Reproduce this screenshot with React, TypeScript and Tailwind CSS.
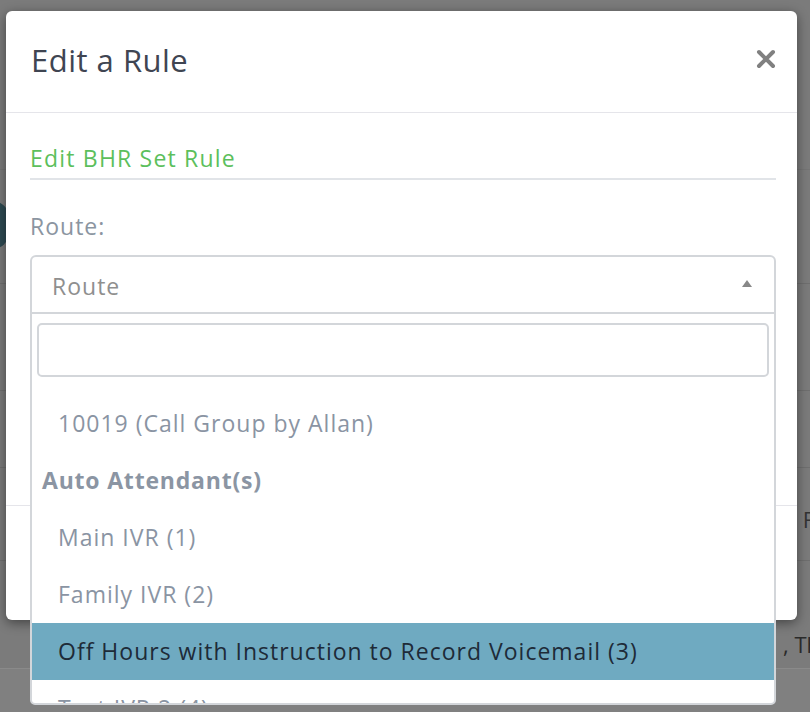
import { useState } from "react";

type Option = {
  label: string;
  group?: boolean;
};

const options: Option[] = [
  { label: "10019 (Call Group by Allan)" },
  { label: "Auto Attendant(s)", group: true },
  { label: "Main IVR (1)" },
  { label: "Family IVR (2)" },
  { label: "Off Hours with Instruction to Record Voicemail (3)" },
  { label: "Test IVR 2 (4)" },
];

const body = { fontFamily: "'Open Sans', Lato, sans-serif" };

export default function App() {
  const [active, setActive] = useState(4);
  const [query, setQuery] = useState("");

  return (
    <div className="relative w-[810px] h-[712px] overflow-hidden bg-[#7b7b7b]" style={body}>
      {/* page behind the overlay */}
      <div className="absolute inset-0">
        <div className="h-[170px] border-b border-[#757575]" />
        <div className="h-[114px] border-b border-[#6f6f6f]" />
        <div className="h-[107px] border-b border-[#6f6f6f]" />
        <div className="h-[77px] border-b border-[#6f6f6f]" />
        <div className="h-[93px] border-b border-[#6f6f6f] flex justify-end items-start pt-[40px]">
          <span className="text-[22px] text-[#333] leading-none mr-[-4px]">F</span>
        </div>
        <div className="h-[108px] border-b border-[#8a8a8a] flex justify-end items-start pt-[72px]">
          <span className="text-[22px] text-[#2a2a2a] leading-none mr-[-10px]">, Th</span>
        </div>
        <div className="h-full bg-[#808080]" />
        <div className="absolute left-[-30px] top-[200px] w-[40px] h-[50px] rounded-full bg-[#2e4a52]" />
      </div>

      {/* modal */}
      <div className="relative ml-[6px] mt-[11px] w-[791px] h-[609px] bg-white rounded-[6px] shadow-[0_3px_12px_rgba(0,0,0,0.45)] flex flex-col">
        <div className="h-[102px] flex items-center justify-between pl-[25px] pr-[21px] border-b border-[#e5e5ea]">
          <h2 className="text-[31px] tracking-[0.5px] text-[#3f4552] mt-[-2px]">Edit a Rule</h2>
          <button className="text-[#808080] mt-[-6px]">
            <svg width="20" height="20" viewBox="0 0 20 20">
              <path d="M3 3 L17 17 M17 3 L3 17" stroke="currentColor" strokeWidth="4" strokeLinecap="round" />
            </svg>
          </button>
        </div>

        <div className="flex-1 pl-[24px] pr-[21px] pt-[31px] tracking-[1px]">
          <div className="pb-[5px] border-b-[2px] border-[#e1e4e8] text-[23px] tracking-[1.2px] text-[#5cbf5c] leading-[29px]">
            Edit BHR Set Rule
          </div>

          <div className="mt-[32px] text-[23px] text-[#8b95a1] leading-[29px]">Route:</div>

          <div className="relative mt-[14px]">
            <div className="h-[59px] border-2 border-[#d3d6da] rounded-t-[6px] flex items-center justify-between pl-[20px] pr-[22px] pt-[4px]">
              <span className="text-[23px] text-[#8f8f8f]">Route</span>
              <svg width="10" height="7" viewBox="0 0 10 7" className="mt-[-6px]">
                <path d="M0 7 L5 0 L10 7 Z" fill="#888" />
              </svg>
            </div>

            <div className="absolute left-0 right-0 top-[57px] z-10 h-[393px] bg-white border-2 border-[#d3d6da] rounded-b-[5px] overflow-hidden">
              <div className="px-[5px] pt-[9px] pb-[18px]">
                <input
                  value={query}
                  onChange={(e) => setQuery(e.target.value)}
                  className="w-full h-[54px] border-2 border-[#d3d6da] rounded-[5px] outline-none px-3 text-[20px]"
                />
              </div>
              <ul>
                {options.map((o, i) =>
                  o.group ? (
                    <li
                      key={o.label}
                      className="h-[57px] flex items-center pl-[10px] text-[23px] font-bold tracking-[0.8px] text-[#8b95a3]"
                    >
                      {o.label}
                    </li>
                  ) : (
                    <li
                      key={o.label}
                      onMouseEnter={() => setActive(i)}
                      className={
                        i === active
                          ? "h-[57px] flex items-center pl-[26px] text-[23px] bg-[#6faac1] text-[#1e2b38]"
                          : "h-[57px] flex items-center pl-[26px] text-[23px] text-[#8a94a3]"
                      }
                    >
                      {o.label}
                    </li>
                  )
                )}
              </ul>
            </div>
          </div>
        </div>

        <div className="h-[115px] border-t border-[#e5e5ea]" />
      </div>
    </div>
  );
}
